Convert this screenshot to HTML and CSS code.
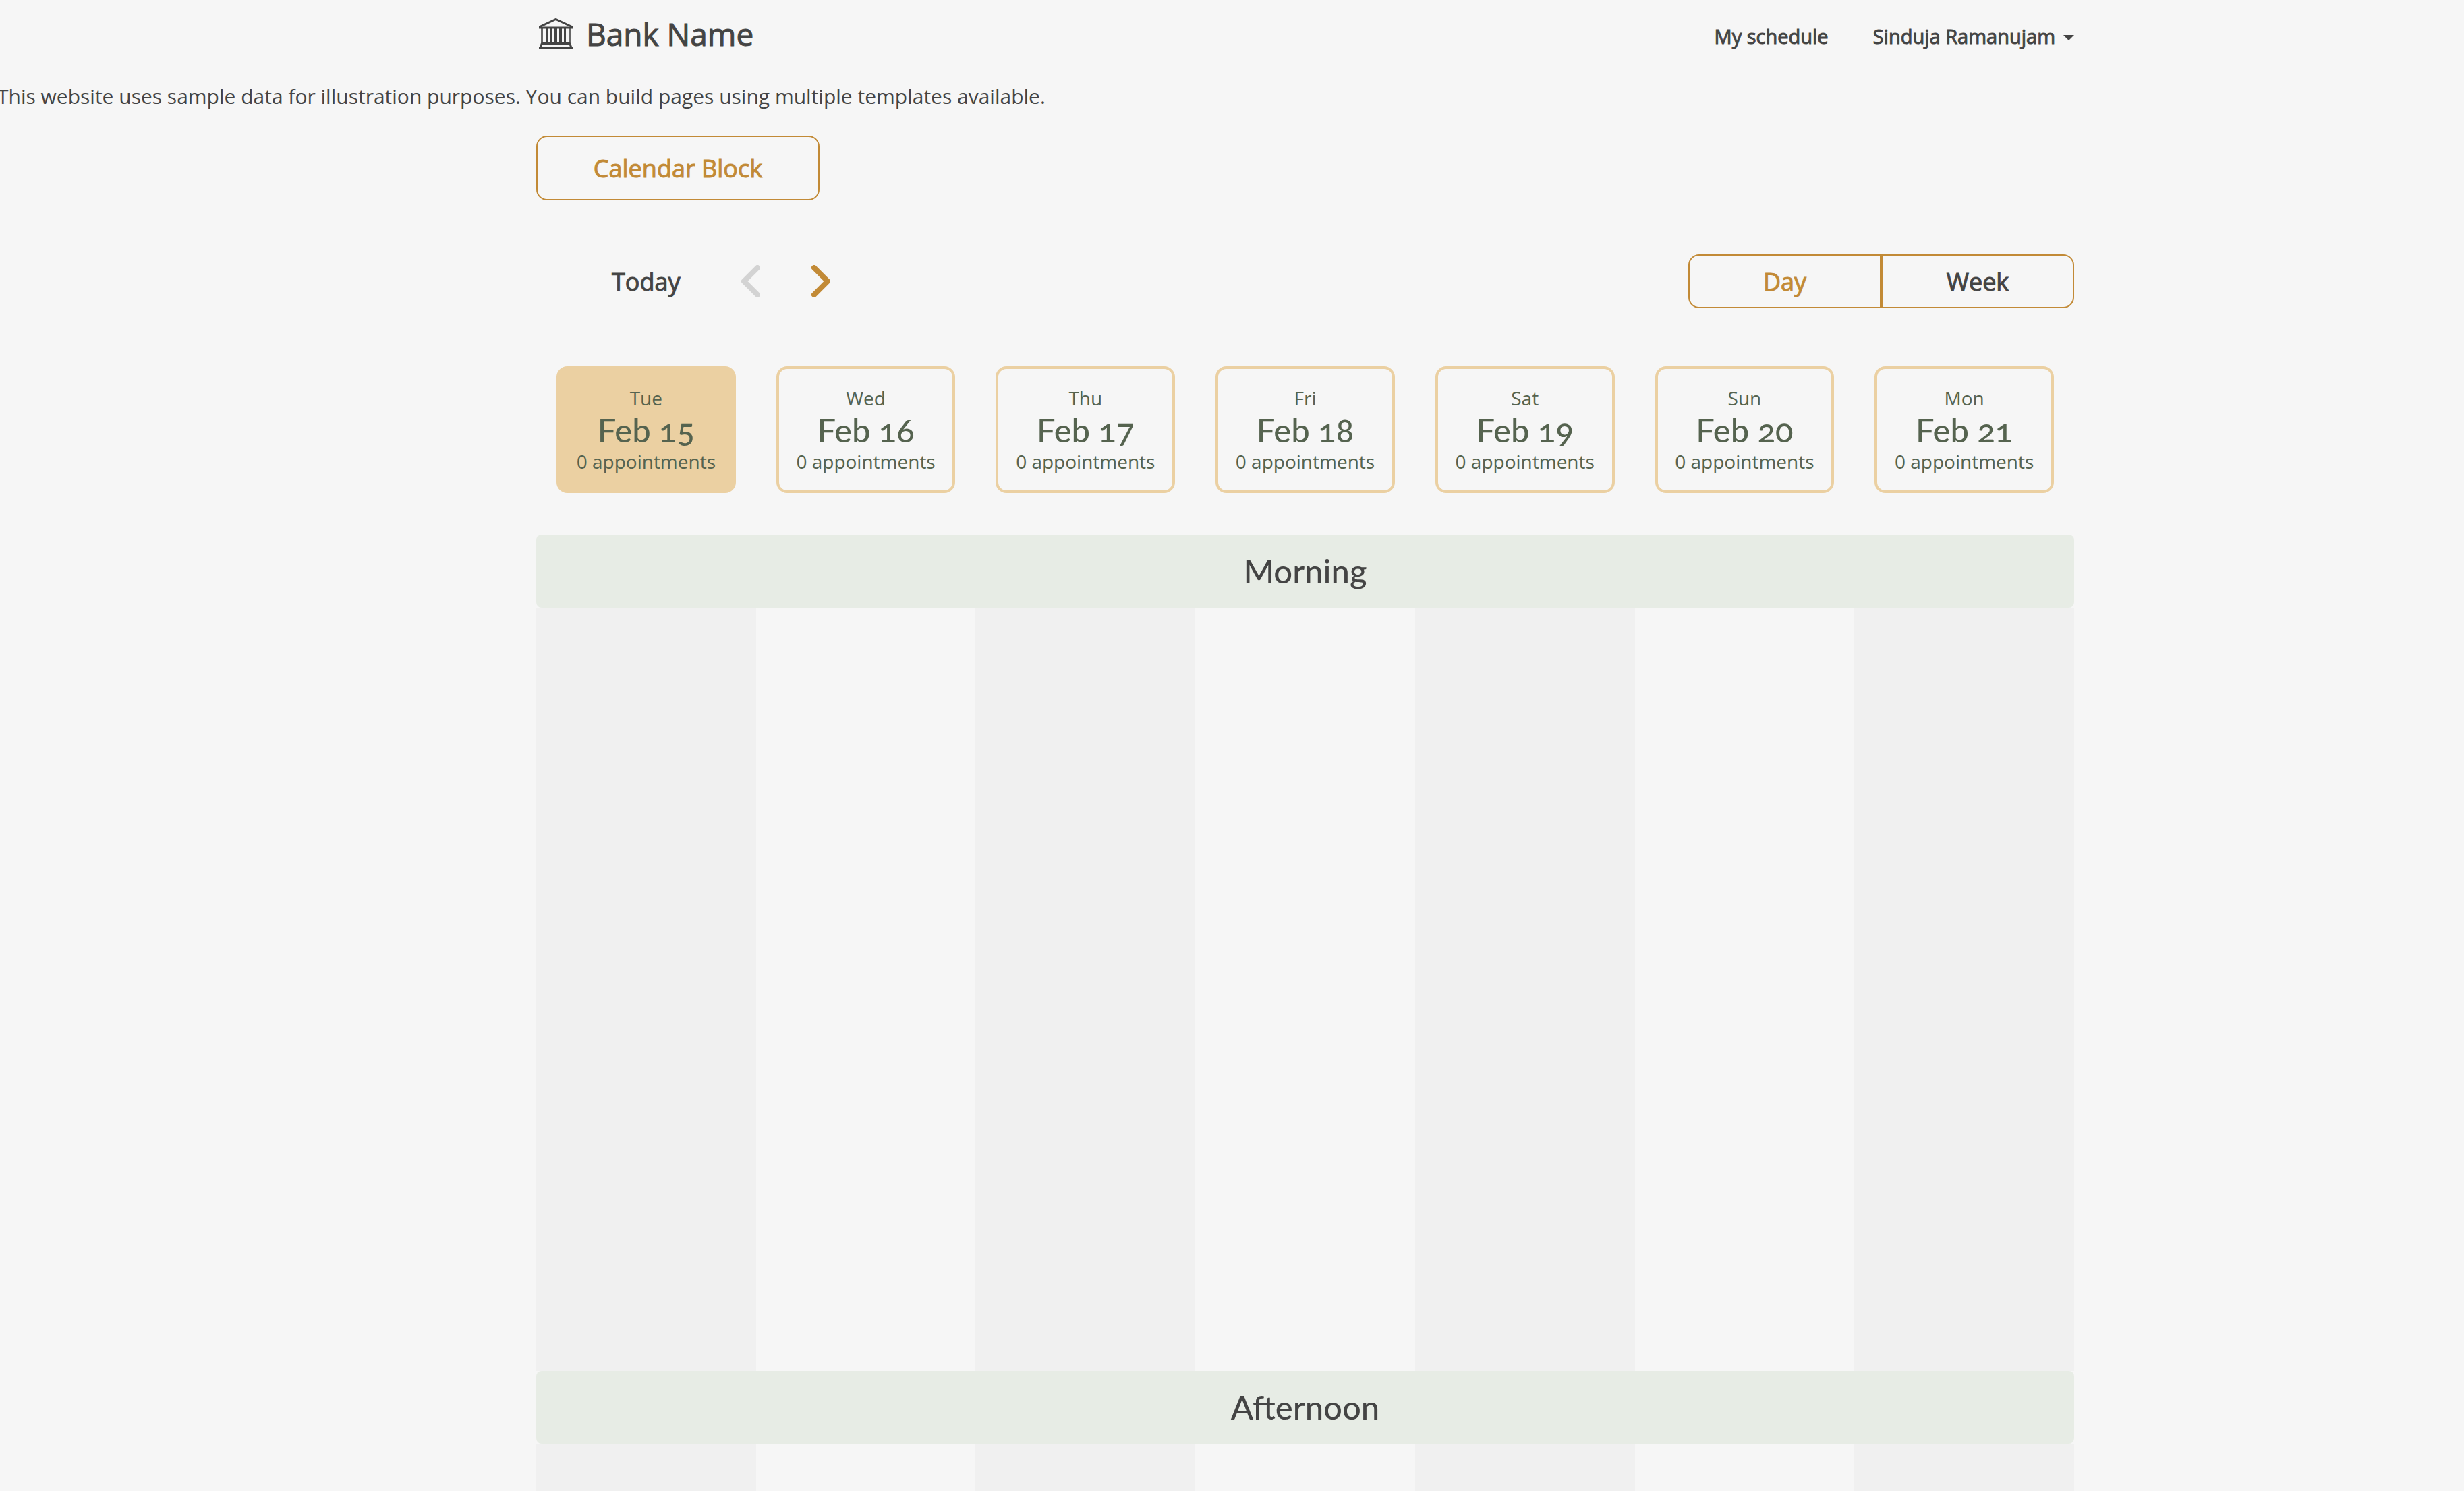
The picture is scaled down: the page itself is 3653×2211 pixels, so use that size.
FILE: index.html
```html
<!DOCTYPE html>
<html lang="en">
<head>
<meta charset="utf-8">
<title>My schedule - Bank Name</title>
<link rel="stylesheet" href="styles.css">
</head>
<body>
<div class="page">
  <header class="topbar">
    <a class="brand" href="#">
      <svg class="brand-icon" viewBox="0 0 50 46" aria-hidden="true">
        <path d="M1 15V12.600L25 1.500L49 12.600V15" fill="none" stroke="currentColor" stroke-width="3"/>
        <path d="M0 12.500H50V15.500H0ZM4 36H46V39H4ZM0 43H50V46H0Z" fill="currentColor"/>
        <path d="M10 15h3v22h-3zM16 15h4v22h-4zM23 15h4v22h-4zM30 15h4v22h-4zM37 15h3v22h-3z" fill="currentColor"/>
        <path d="M4.500 15V37M45.500 15V37" stroke="currentColor" stroke-width="3" opacity=".8"/>
        <path d="M4.500 37L1.500 45M45.500 37L48.500 45" stroke="currentColor" stroke-width="3"/>
      </svg>
      <span>Bank Name</span>
    </a>
    <nav class="nav">
      <a class="nav-link" href="#">My schedule</a>
      <button class="nav-link user" type="button">Sinduja Ramanujam<span class="caret"></span></button>
    </nav>
  </header>

  <p class="notice">This website uses sample data for illustration purposes. You can build pages using multiple templates available.</p>

  <main class="schedule">
    <button class="block-button" type="button">Calendar Block</button>

    <div class="toolbar">
      <div class="stepper">
        <button class="today" type="button">Today</button>
        <button class="step" type="button" aria-label="Previous" disabled>
          <svg viewBox="0 0 28 48" aria-hidden="true"><path d="M24 4L4 24L24 44"/></svg>
        </button>
        <button class="step" type="button" aria-label="Next">
          <svg viewBox="0 0 28 48" aria-hidden="true"><path d="M4 4L24 24L4 44"/></svg>
        </button>
      </div>
      <div class="view-switch">
        <button class="view selected" type="button">Day</button>
        <button class="view" type="button">Week</button>
      </div>
    </div>

    <div class="days">
      <button class="day selected" type="button"><span>Tue</span><strong>Feb 15</strong><span>0 appointments</span></button>
      <button class="day" type="button"><span>Wed</span><strong>Feb 16</strong><span>0 appointments</span></button>
      <button class="day" type="button"><span>Thu</span><strong>Feb 17</strong><span>0 appointments</span></button>
      <button class="day" type="button"><span>Fri</span><strong>Feb 18</strong><span>0 appointments</span></button>
      <button class="day" type="button"><span>Sat</span><strong>Feb 19</strong><span>0 appointments</span></button>
      <button class="day" type="button"><span>Sun</span><strong>Feb 20</strong><span>0 appointments</span></button>
      <button class="day" type="button"><span>Mon</span><strong>Feb 21</strong><span>0 appointments</span></button>
    </div>

    <h2 class="period">Morning</h2>
    <div class="slots morning"><div></div><div></div><div></div><div></div><div></div><div></div><div></div></div>
    <h2 class="period">Afternoon</h2>
    <div class="slots afternoon"><div></div><div></div><div></div><div></div><div></div><div></div><div></div></div>
  </main>
</div>
</body>
</html>
```
FILE: styles.css
```css
* { box-sizing: border-box; }

body {
  margin: 0;
  background: #f6f6f6;
  color: #444;
  font-family: "Open Sans", "Noto Sans", sans-serif;
}

button {
  margin: 0;
  padding: 0;
  border: 0;
  background: none;
  color: inherit;
  font: inherit;
}

a { color: inherit; text-decoration: none; }

.page {
  display: grid;
  grid-template-columns: 795fr minmax(0, 2280px) 578fr;
  grid-template-rows: auto auto 1fr;
  min-height: 100vh;
}

.topbar {
  grid-column: 2;
  display: flex;
  justify-content: space-between;
  align-items: center;
  height: 108px;
  -webkit-text-stroke: 1px currentColor;
}

.brand {
  display: flex;
  align-items: center;
  gap: 20px;
  padding: 0 0 8px 4px;
  font-size: 46px;
  line-height: 62px;
}

.brand-icon { width: 50px; height: 46px; }

.nav { display: flex; gap: 66px; font-size: 29px; line-height: 40px; }

.user { display: flex; align-items: center; gap: 12px; }

.caret {
  border: 8px solid transparent;
  border-top-color: currentColor;
  border-bottom: 0;
  margin-top: 4px;
}

.notice {
  grid-column: 1 / -1;
  margin: 0 0 21px -4px;
  padding: 11px 0 13px;
  font-size: 30px;
  line-height: 48px;
}

.schedule {
  grid-column: 2;
  display: flex;
  flex-direction: column;
}

.block-button {
  align-self: flex-start;
  width: 420px;
  height: 96px;
  border: 2px solid #c28a36;
  border-radius: 16px;
  color: #c28a36;
  font-size: 36px;
  -webkit-text-stroke: 1px currentColor;
}

.toolbar {
  display: flex;
  justify-content: space-between;
  margin: 80px 0 86px;
  font-size: 36px;
  -webkit-text-stroke: 1px currentColor;
}

.stepper { display: flex; align-items: center; gap: 76px; padding-left: 112px; }

.today { margin-right: 14px; }

.step { display: flex; color: #c28a36; }
.step:disabled { color: #d3d3d3; }

.step svg {
  width: 28px;
  height: 48px;
  fill: none;
  stroke: currentColor;
  stroke-width: 8;
  stroke-linecap: round;
  stroke-linejoin: round;
}

.view-switch {
  display: flex;
  width: 572px;
  height: 80px;
  border: 2px solid #c28a36;
  border-radius: 16px;
}

.view { flex: 1; }
.view + .view { border-left: 4px solid #c28a36; }
.view.selected { color: #c28a36; }

.days {
  display: grid;
  grid-template-columns: repeat(7, 1fr);
  margin-bottom: 62px;
}

.day {
  display: flex;
  flex-direction: column;
  align-items: center;
  justify-content: center;
  height: 188px;
  margin: 0 30px;
  border: 4px solid #ebd0a2;
  border-radius: 16px;
  color: #55634f;
  font-size: 28px;
  line-height: 44px;
}

.day.selected { background: #ebd0a2; }

.day strong, .period {
  font-family: Lato, sans-serif;
  font-size: 49px;
  font-weight: 500;
  font-variant-numeric: oldstyle-nums;
}

.day strong { line-height: 50px; }

.period {
  margin: 0;
  padding: 23px 24px 25px;
  border-radius: 8px;
  background: #e7ece5;
  line-height: 60px;
  text-align: center;
}

.slots { display: grid; grid-template-columns: repeat(7, 1fr); }
.slots > :nth-child(odd) { background: #f0f0f0; }
.morning { height: 1132px; }
.afternoon { flex: 1; min-height: 70px; }
```
